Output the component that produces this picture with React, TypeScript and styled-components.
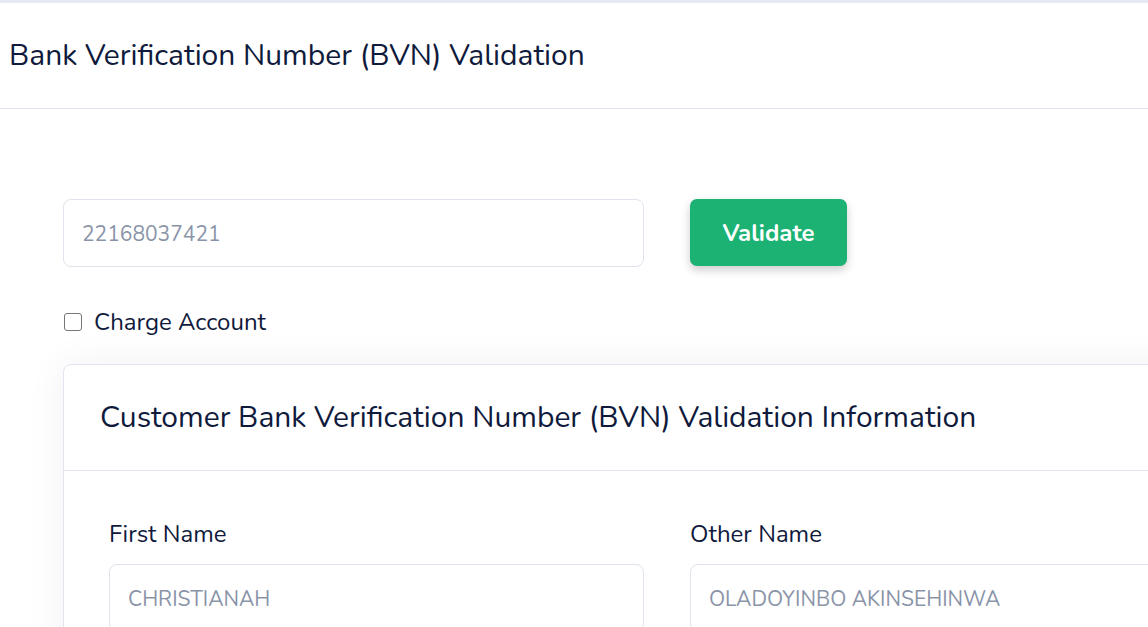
import * as React from 'react';
import styled, { createGlobalStyle } from 'styled-components';

const GlobalStyle = createGlobalStyle`
    html, body {
        margin: 0;
        padding: 0;
        background: #ffffff;
        overflow: hidden;
    }
    body {
        font-family: 'Nunito', 'Open Sans', 'Noto Sans', sans-serif;
        color: #0f1a3c;
    }
`;

const Page = styled.div`
    border-top: 3px solid #e5eaf3;
    min-height: 624px;
`;

const Header = styled.header`
    height: 105px;
    display: flex;
    align-items: center;
    padding-left: 9px;
    border-bottom: 1px solid #dfe4ee;
`;

const Title = styled.h1`
    margin: 0;
    font-size: 30px;
    font-weight: 400;
    color: #0f1a3c;
`;

const Content = styled.main`
    padding: 90px 0 0 63px;
`;

const SearchRow = styled.div`
    display: flex;
    align-items: flex-start;
    gap: 46px;
`;

const TextField = styled.input<{ $width: number }>`
    box-sizing: border-box;
    width: ${(p) => p.$width}px;
    height: 68px;
    padding: 1px 18px 0;
    border: 1px solid #dfe3ec;
    border-radius: 8px;
    font-family: inherit;
    font-size: 21px;
    color: #0f1a3c;
    background: #ffffff;
    outline: none;

    &::placeholder {
        color: #8a94a8;
    }
`;

const ValidateButton = styled.button`
    width: 157px;
    height: 67px;
    border: none;
    border-radius: 7px;
    background: #1bb273;
    color: #ffffff;
    font-family: inherit;
    font-size: 24px;
    font-weight: 700;
    box-shadow: 0 4px 10px rgba(0, 0, 0, 0.2);
    cursor: pointer;
`;

const CheckRow = styled.label`
    display: flex;
    align-items: center;
    gap: 12px;
    margin-top: 39px;
    font-size: 24px;
    color: #0f1a3c;
`;

const Box = styled.input`
    appearance: none;
    box-sizing: border-box;
    width: 18px;
    height: 18px;
    margin: 0 0 0 1px;
    border: 1.5px solid #767676;
    border-radius: 3px;
    background: #ffffff;
`;

const Card = styled.section`
    width: 1208px;
    margin-top: 26px;
    border: 1px solid #e2e5ef;
    border-radius: 8px;
    background: #ffffff;
    box-shadow: 0 0 40px rgba(30, 40, 90, 0.06);
`;

const CardHeader = styled.div`
    height: 105px;
    display: flex;
    align-items: center;
    padding-left: 36px;
    border-bottom: 1px solid #dfe3ee;
`;

const CardTitle = styled.h2`
    margin: 0;
    font-size: 30px;
    font-weight: 400;
    color: #0f1a3c;
`;

const CardBody = styled.div`
    display: grid;
    grid-template-columns: 535px 535px;
    column-gap: 46px;
    padding: 47px 45px 40px;
`;

const Field = styled.div`
    display: flex;
    flex-direction: column;
    gap: 14px;
`;

const FieldLabel = styled.label`
    font-size: 24px;
    color: #0f1a3c;
`;

const fields = [
    { label: 'First Name', value: 'CHRISTIANAH' },
    { label: 'Other Name', value: 'OLADOYINBO AKINSEHINWA' },
];

export default function App() {
    return (
        <>
            <GlobalStyle />
            <Page>
                <Header>
                    <Title>Bank Verification Number (BVN) Validation</Title>
                </Header>
                <Content>
                    <SearchRow>
                        <TextField $width={581} placeholder="22168037421" />
                        <ValidateButton>Validate</ValidateButton>
                    </SearchRow>
                    <CheckRow>
                        <Box type="checkbox" />
                        Charge Account
                    </CheckRow>
                    <Card>
                        <CardHeader>
                            <CardTitle>Customer Bank Verification Number (BVN) Validation Information</CardTitle>
                        </CardHeader>
                        <CardBody>
                            {fields.map((f) => (
                                <Field key={f.label}>
                                    <FieldLabel>{f.label}</FieldLabel>
                                    <TextField $width={535} placeholder={f.value} />
                                </Field>
                            ))}
                        </CardBody>
                    </Card>
                </Content>
            </Page>
        </>
    );
}
